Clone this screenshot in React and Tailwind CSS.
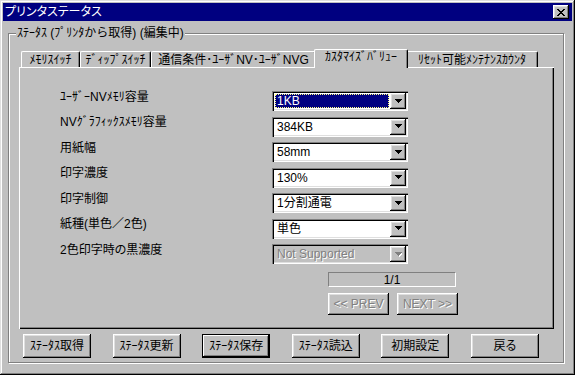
import React from 'react';

const TABS = [
  { label: 'ﾒﾓﾘｽｲｯﾁ', w: 'w-[59px]' },
  { label: 'ﾃﾞｨｯﾌﾟｽｲｯﾁ', w: 'w-[71px]' },
  { label: '通信条件･ﾕｰｻﾞNV･ﾕｰｻﾞNVG', w: 'w-[165px]' },
  { label: 'ｶｽﾀﾏｲｽﾞﾊﾞﾘｭｰ', w: 'w-[94px]', active: true },
  { label: 'ﾘｾｯﾄ可能ﾒﾝﾃﾅﾝｽｶｳﾝﾀ', w: 'w-[132px]' },
];

const ROWS = [
  { label: 'ﾕｰｻﾞｰNVﾒﾓﾘ容量', value: '1KB', selected: true },
  { label: 'NVｸﾞﾗﾌｨｯｸｽﾒﾓﾘ容量', value: '384KB' },
  { label: '用紙幅', value: '58mm' },
  { label: '印字濃度', value: '130%' },
  { label: '印字制御', value: '1分割通電' },
  { label: '紙種(単色／2色)', value: '単色' },
  { label: '2色印字時の黒濃度', value: 'Not Supported', disabled: true },
];

const BUTTONS = ['ｽﾃｰﾀｽ取得', 'ｽﾃｰﾀｽ更新', 'ｽﾃｰﾀｽ保存', 'ｽﾃｰﾀｽ読込', '初期設定', '戻る'];

const RAISED = 'shadow-[inset_-1px_-1px_#000,inset_1px_1px_#fff,inset_-2px_-2px_#808080,inset_2px_2px_#dfdfdf]';

const CloseX = () => (
  <svg width="8" height="7" viewBox="0 0 8 7" shapeRendering="crispEdges">
    <path fill="#000" d="M0 0h2v1H0zM6 0h2v1H6zM1 1h2v1H1zM5 1h2v1H5zM2 2h4v1H2zM3 3h2v1H3zM2 4h4v1H2zM1 5h2v1H1zM5 5h2v1H5zM0 6h2v1H0zM6 6h2v1H6z" />
  </svg>
);

const Arrow = ({ disabled }) => (
  <svg width="7" height="5" viewBox="0 0 7 5" shapeRendering="crispEdges">
    {disabled && <path fill="#fff" d="M1 1h7v1H1zM2 2h5v1H2zM3 3h3v1H3zM4 4h1v1H4z" />}
    <path fill={disabled ? '#808080' : '#000'} d="M0 0h7v1H0zM1 1h5v1H1zM2 2h3v1H2zM3 3h1v1H3z" />
  </svg>
);

const Combo = ({ value, selected, disabled }) => (
  <div
    className={`w-[136px] h-[20px] p-[2px] flex shadow-[inset_1px_1px_#808080,inset_2px_2px_#000,inset_-1px_-1px_#fff,inset_-2px_-2px_#dfdfdf] ${
      disabled ? 'bg-[#c0c0c0]' : 'bg-white'
    }`}
  >
    <div className="flex-1 flex p-[1px] min-w-0">
      {selected ? (
        <span className="flex-1 flex items-center pl-[1px] bg-[#000080] text-white border border-dotted border-[#ffff80]">
          {value}
        </span>
      ) : (
        <span
          className={`flex-1 flex items-center pl-[2px] ${
            disabled ? 'text-[#808080] [text-shadow:1px_1px_0_#fff]' : ''
          }`}
        >
          {value}
        </span>
      )}
    </div>
    <div className={`w-[16px] h-[16px] flex items-center justify-center bg-[#c0c0c0] ${RAISED}`}>
      <Arrow disabled={disabled} />
    </div>
  </div>
);

export default function App() {
  return (
    <div
      className="w-[575px] h-[375px] bg-[#c0c0c0] p-[3px] flex flex-col text-[12px] leading-[14px] text-black font-['Liberation_Sans','Noto_Sans_CJK_JP',sans-serif] [font-feature-settings:'palt'] shadow-[inset_-1px_-1px_#000,inset_1px_1px_#dfdfdf,inset_-2px_-2px_#808080,inset_2px_2px_#fff]"
    >
      {/* title bar */}
      <div className="h-[18px] bg-[#000080] flex items-center pl-[2px] pr-[3px]">
        <span className="flex-1 text-white font-normal">プリンタステータス</span>
        <div className={`w-[16px] h-[14px] bg-[#c0c0c0] flex items-center justify-center ${RAISED}`}>
          <CloseX />
        </div>
      </div>

      {/* group box */}
      <div className="relative mt-[12px] ml-[5px] w-[556px] h-[330px] flex flex-col border border-[#808080] shadow-[inset_1px_1px_0_#fff,1px_1px_0_#fff]">
        <span className="absolute top-[-8px] left-[7px] px-[1px] bg-[#c0c0c0] [font-feature-settings:normal]">
          ｽﾃｰﾀｽ (ﾌﾟﾘﾝﾀから取得) (編集中)
        </span>

        {/* tabs */}
        <div className="mt-[15px] ml-[10px] h-[18px] flex items-end pl-[2px] relative z-10">
          {TABS.map(t =>
            t.active ? (
              <div
                key={t.label}
                className={`${t.w} -mx-[2px] -mb-px h-[19px] pb-[4px] flex items-center justify-center bg-[#c0c0c0] border-l border-t border-r border-l-white border-t-white border-r-black rounded-t-[2px] shadow-[inset_-1px_0_#808080] relative z-10`}
              >
                {t.label}
              </div>
            ) : (
              <div
                key={t.label}
                className={`${t.w} h-[16px] flex items-center justify-center border-l border-t border-r border-l-white border-t-white border-r-black rounded-t-[2px] shadow-[inset_-1px_0_#808080]`}
              >
                {t.label}
              </div>
            )
          )}
        </div>

        {/* tab panel */}
        <div className="ml-[10px] w-[535px] h-[262px] pt-[24px] pl-[41px] flex flex-col shadow-[inset_1px_1px_#fff,inset_-1px_-1px_#000,inset_-2px_-2px_#808080]">
          <div className="flex flex-col gap-[5.5px]">
            {ROWS.map(r => (
              <div key={r.label} className="h-[20px] flex items-center">
                <span className="w-[212px] -mt-[9px]">{r.label}</span>
                <Combo value={r.value} selected={r.selected} disabled={r.disabled} />
              </div>
            ))}
          </div>

          <div className="mt-[8px] ml-[268px] w-[128px] h-[15px] flex items-center justify-center border-t border-l border-b border-r border-t-[#808080] border-l-[#808080] border-b-white border-r-white">
            1/1
          </div>

          <div className="mt-[6px] ml-[268px] flex gap-[8px]">
            {['<< PREV', 'NEXT >>'].map(b => (
              <div
                key={b}
                className={`w-[61px] h-[22px] flex items-center justify-center text-[#808080] [text-shadow:1px_1px_0_#fff] ${RAISED}`}
              >
                {b}
              </div>
            ))}
          </div>
        </div>

        {/* bottom buttons */}
        <div className="mt-[5px] pl-[14px] pr-[24px] flex justify-between">
          {BUTTONS.map(b =>
            b === 'ｽﾃｰﾀｽ保存' ? (
              <div
                key={b}
                className="w-[68px] h-[24px] flex items-center justify-center border border-black shadow-[inset_-1px_-1px_#000,inset_1px_1px_#fff,inset_-2px_-2px_#808080]"
              >
                {b}
              </div>
            ) : (
              <div key={b} className={`w-[68px] h-[24px] flex items-center justify-center ${RAISED}`}>
                {b}
              </div>
            )
          )}
        </div>
      </div>
    </div>
  );
}
